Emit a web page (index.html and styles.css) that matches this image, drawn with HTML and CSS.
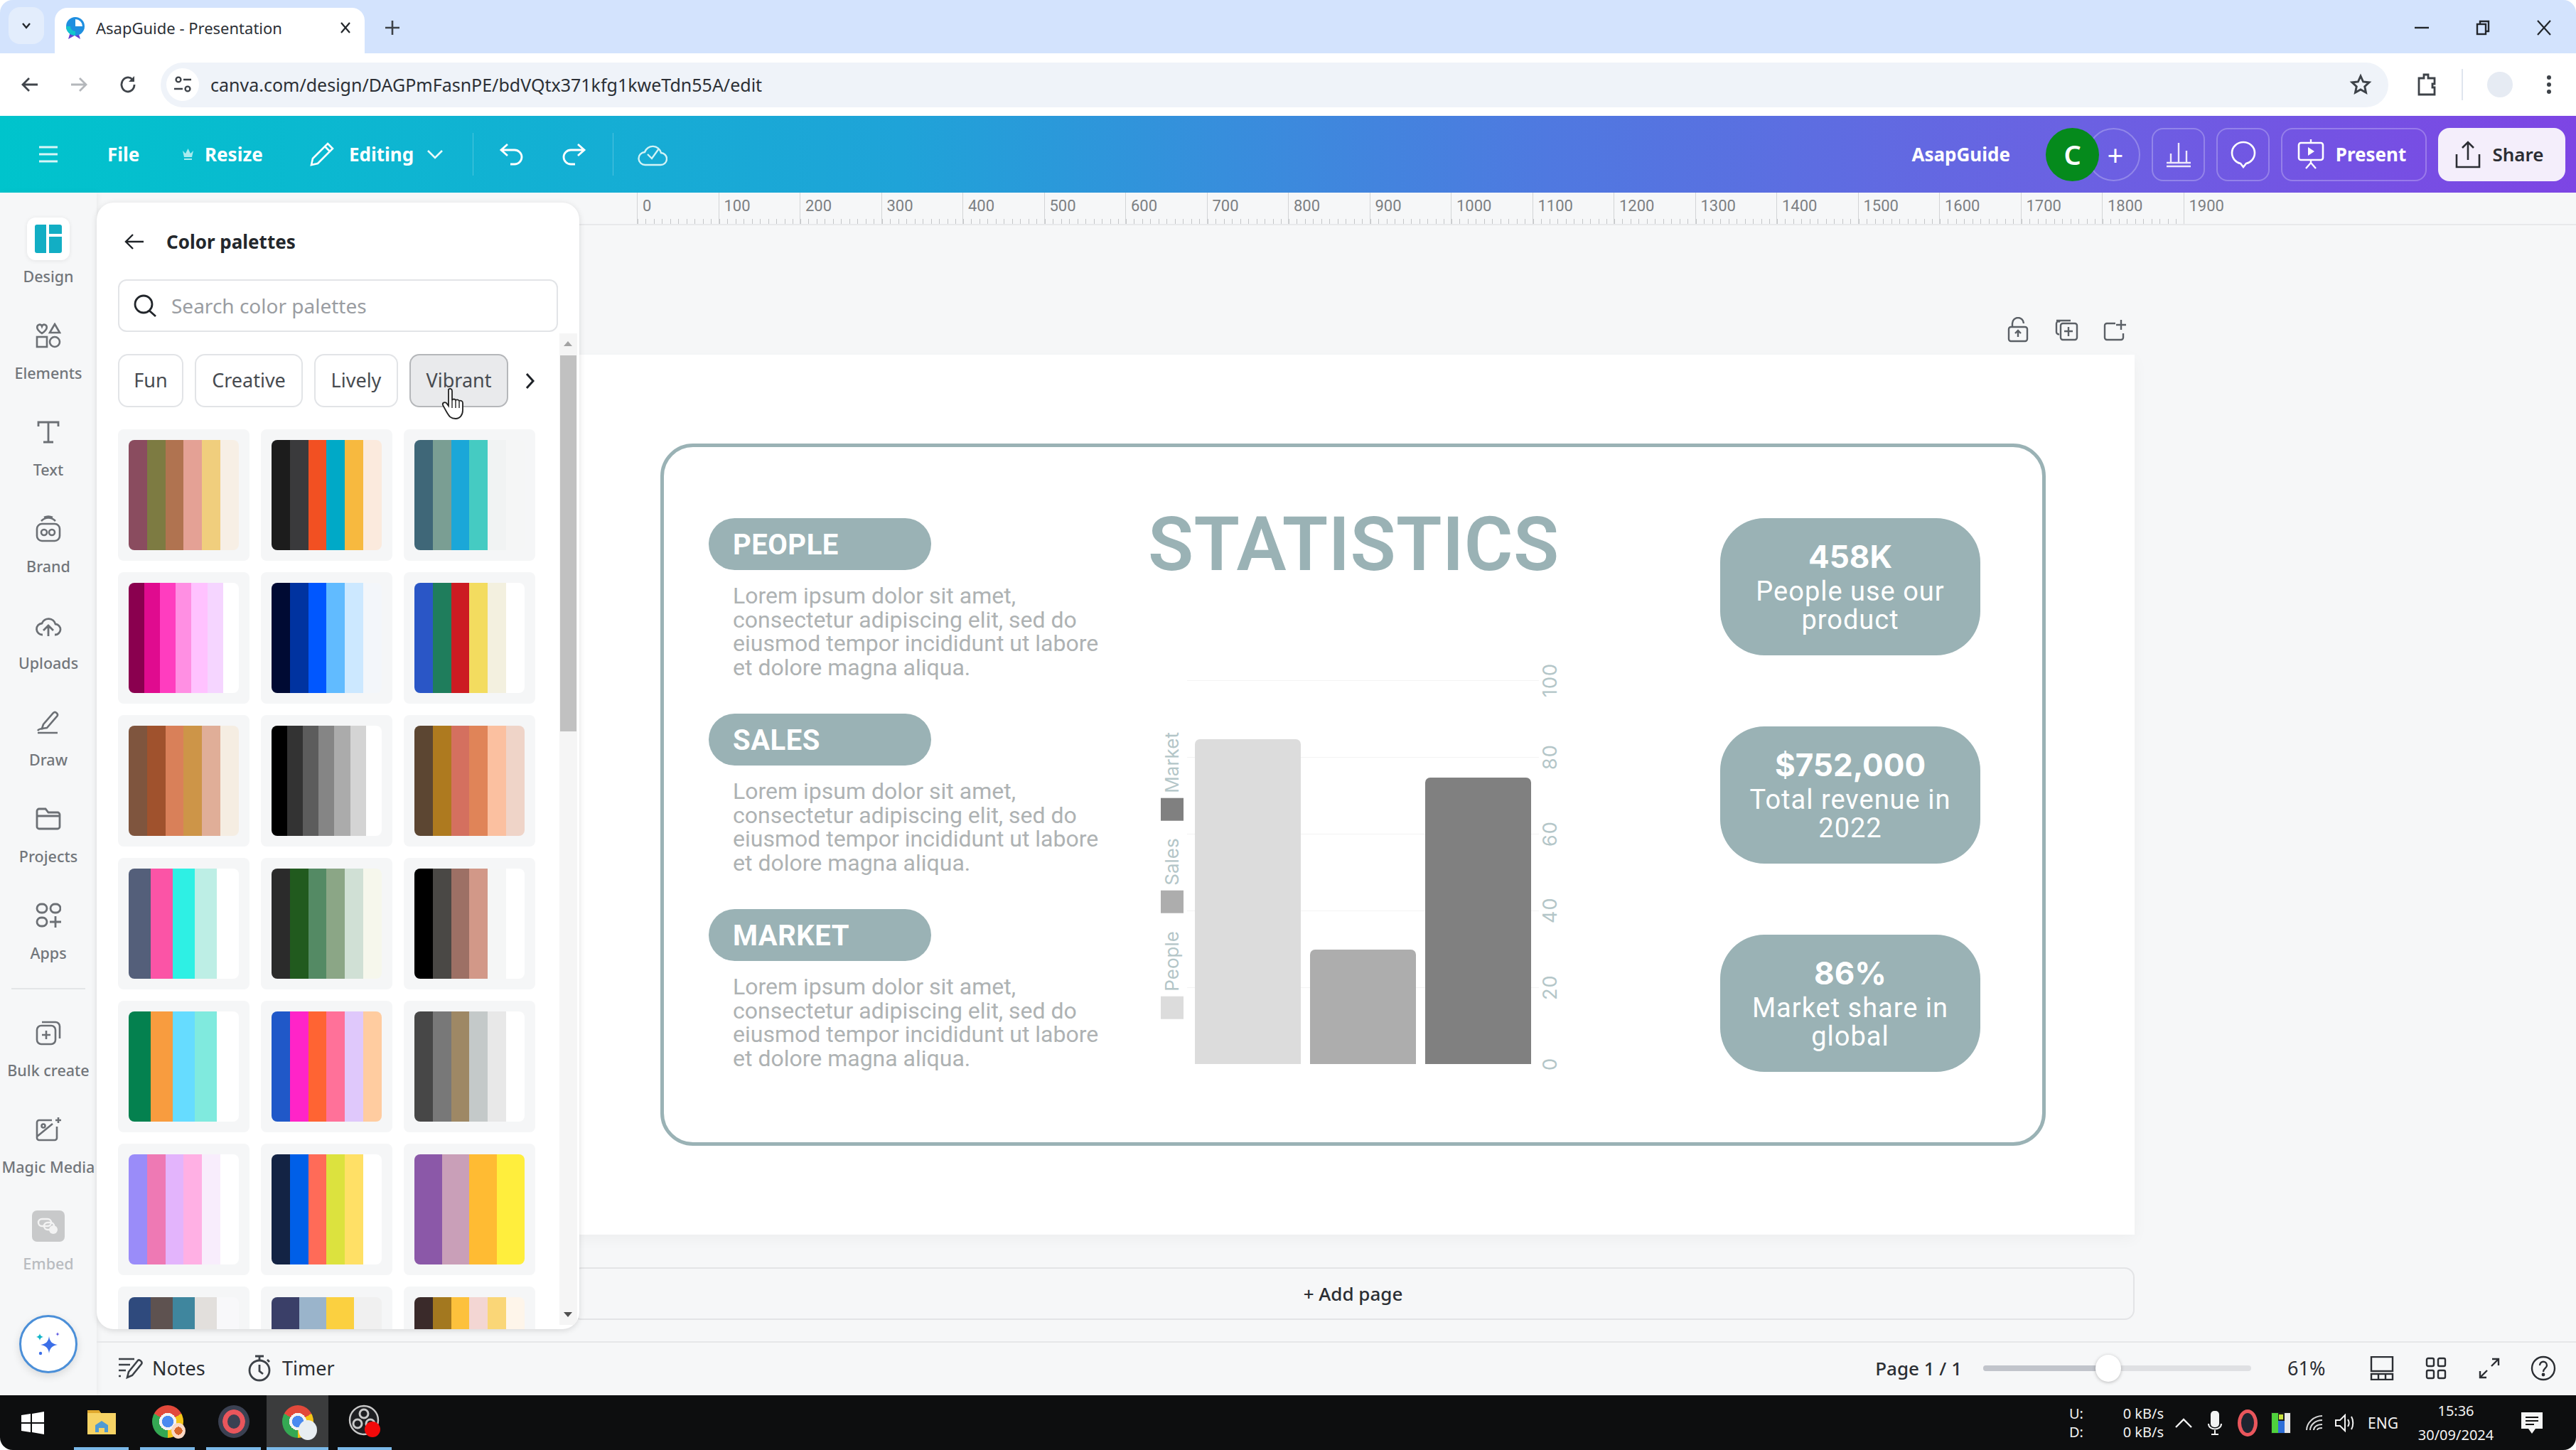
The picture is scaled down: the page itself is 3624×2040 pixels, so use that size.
FILE: index.html
```html
<!DOCTYPE html>
<html lang="en">
<head>
<meta charset="UTF-8">
<title>AsapGuide - Presentation</title>
<link rel="stylesheet" href="styles.css">
</head>
<body>
<div id="screen">

	<!-- browser tabs -->
	<div class="tabstrip">
		<div class="tab-list-btn">
			<svg width="18" height="18" viewBox="0 0 18 18"><path d="M4 6l5 6 5-6" fill="none" stroke="#22262b" stroke-width="2.4"/></svg>
		</div>
		<div class="tab">
			<svg class="favicon" width="30" height="31" viewBox="0 0 30 31"><path d="M8 21l-3 10 9-5 8 5-3-10z" fill="#6a3fd0"/><circle cx="15" cy="13" r="13" fill="#1f8fe0"/><path d="M15 3a10 10 0 0 1 10 10H15z" fill="#fff"/><path d="M2 13a13 13 0 0 0 13 13v-6a7 7 0 0 1-7-7z" fill="#14c4cc"/></svg>
			<span class="tab-title">AsapGuide - Presentation</span>
			<svg class="tab-close" width="20" height="20" viewBox="0 0 20 20"><path d="M4 3l12 14M16 3L4 17" stroke="#22262b" stroke-width="2.2"/></svg>
		</div>
		<svg class="new-tab" width="24" height="24" viewBox="0 0 24 24"><path d="M12 2v20M2 12h20" stroke="#3d4248" stroke-width="2.6"/></svg>
		<div class="win-btns">
			<svg width="24" height="24" viewBox="0 0 24 24"><path d="M2 12h20" stroke="#22262b" stroke-width="2.4"/></svg>
			<svg width="24" height="24" viewBox="0 0 24 24"><rect x="4" y="7" width="12" height="14" fill="none" stroke="#22262b" stroke-width="2.4"/><path d="M8 7V3h12v14h-4" fill="none" stroke="#22262b" stroke-width="2.4"/></svg>
			<svg width="24" height="24" viewBox="0 0 24 24"><path d="M3 2l18 20M21 2L3 22" stroke="#22262b" stroke-width="2.2"/></svg>
		</div>
	</div>

	<!-- address bar -->
	<div class="toolbar">
		<svg width="26" height="26" viewBox="0 0 26 26"><path d="M24 13H4M12 4l-9 9 9 9" fill="none" stroke="#40454b" stroke-width="2.8"/></svg>
		<svg class="nav-off" width="26" height="26" viewBox="0 0 26 26"><path d="M2 13h20M14 4l9 9-9 9" fill="none" stroke="#b4b7bb" stroke-width="2.8"/></svg>
		<svg class="nav-reload" width="26" height="28" viewBox="0 0 26 28"><path d="M22 14a9 10 0 1 1-3-7.5" fill="none" stroke="#40454b" stroke-width="2.8"/><path d="M22 2v8h-8z" fill="#40454b"/></svg>
		<div class="omnibox">
			<span class="site-info">
				<svg width="26" height="26" viewBox="0 0 26 26" fill="none" stroke="#3d4248" stroke-width="2.4"><circle cx="7" cy="6" r="3.4"/><path d="M14 6h11M1 19h12"/><circle cx="20" cy="19" r="3.4"/></svg>
			</span>
			<span class="url">canva.com/design/DAGPmFasnPE/bdVQtx371kfg1kweTdn55A/edit</span>
			<svg class="star" width="32" height="32" viewBox="0 0 24 24"><path d="M12 3l2.7 6 6.3.7-4.7 4.3 1.3 6.4L12 17.2l-5.6 3.2 1.3-6.4L3 9.7 9.3 9z" fill="none" stroke="#3d4248" stroke-width="2.2"/></svg>
		</div>
		<svg class="ext" width="30" height="34" viewBox="0 0 30 34"><path d="M4 8h7V3h6v5h9v8h-3v5h3v10H4z" fill="none" stroke="#3d4248" stroke-width="2.8"/></svg>
		<span class="tb-sep"></span>
		<span class="avatar-blank"></span>
		<svg class="kebab" width="8" height="28" viewBox="0 0 8 28"><circle cx="4" cy="4" r="3" fill="#3d4248"/><circle cx="4" cy="14" r="3" fill="#3d4248"/><circle cx="4" cy="24" r="3" fill="#3d4248"/></svg>
	</div>

	<!-- canva header -->
	<div class="appbar">
		<svg class="menu-icon" width="28" height="28" viewBox="0 0 28 28"><path d="M1 4h26M1 14h26M1 24h26" stroke="#d8f6f7" stroke-width="3"/></svg>
		<span class="ab-text ab-file">File</span>
		<svg class="crown" width="17" height="20" viewBox="0 0 17 20"><path d="M1 5l4 4 3.5-7 3.5 7 4-4-2 9H3zM3 16h11v2H3z" fill="#a8ebee"/></svg>
		<span class="ab-text ab-resize">Resize</span>
		<svg class="pencil" width="36" height="36" viewBox="0 0 36 36"><path d="M26 3l7 7L12 31l-9 2 2-9zM22 7l7 7" fill="none" stroke="#fff" stroke-width="2.6"/></svg>
		<span class="ab-text ab-editing">Editing</span>
		<svg class="ab-chev" width="24" height="16" viewBox="0 0 24 16"><path d="M2 3l10 10L22 3" fill="none" stroke="#e8fbfb" stroke-width="2.6"/></svg>
		<span class="ab-sep"></span>
		<svg class="undo" width="36" height="32" viewBox="0 0 36 32"><path d="M12 2L3 10l9 8M4 10h18a10 10 0 0 1 0 20h-6" fill="none" stroke="#fff" stroke-width="2.8"/></svg>
		<svg class="redo" width="36" height="32" viewBox="0 0 36 32"><path d="M24 2l9 8-9 8M32 10H14a10 10 0 0 0 0 20h6" fill="none" stroke="#fff" stroke-width="2.8"/></svg>
		<span class="ab-sep ab-sep2"></span>
		<svg class="cloud" width="42" height="36" viewBox="0 0 42 36"><path d="M11 33a9 9 0 0 1-1-18 12 12 0 0 1 23 1 8.500 8.500 0 0 1-1 17z" fill="none" stroke="#d2f3f6" stroke-width="2.4"/><path d="M14 18l6 6 10-14" fill="none" stroke="#d2f3f6" stroke-width="2.4"/></svg>

		<span class="ab-spacer"></span>
		<span class="ab-text ab-brand">AsapGuide</span>
		<div class="collab">
			<span class="collab-c">C</span>
			<span class="collab-plus">+</span>
		</div>
		<div class="ab-btn ab-btn-sq">
			<svg width="36" height="38" viewBox="0 0 36 38"><path d="M1 36h34M7 30V18M18 30V3M29 30V14M1 31h34" stroke="#eee8fb" stroke-width="2.4" fill="none"/></svg>
		</div>
		<div class="ab-btn ab-btn-sq">
			<svg width="38" height="40" viewBox="0 0 38 40"><path d="M19 3c9 0 16 7 16 15s-6 14-12 15l-4 5-4-5C9 32 3 26 3 18S10 3 19 3z" fill="none" stroke="#fff" stroke-width="2.6"/></svg>
		</div>
		<div class="ab-btn ab-present">
			<svg width="38" height="42" viewBox="0 0 38 42"><path d="M19 0v5" stroke="#fff" stroke-width="2.4"/><rect x="2" y="5" width="34" height="24" rx="3" fill="none" stroke="#fff" stroke-width="2.6"/><path d="M15 11l9 6-9 6z" fill="#fff"/><path d="M19 29v4M19 33l-7 8M19 33l7 8" stroke="#fff" stroke-width="2.4"/></svg>
			<span class="ab-text">Present</span>
		</div>
		<div class="ab-btn ab-share">
			<svg width="36" height="40" viewBox="0 0 36 40"><path d="M18 28V3M10 11l8-8 8 8M2 20v18h32V20" fill="none" stroke="#2b2d33" stroke-width="2.6"/></svg>
			<span>Share</span>
		</div>
	</div>

	<div class="workspace">

		<!-- left rail -->
		<div class="rail">
			<div class="rail-item">
				<span class="rail-icon rail-tile">
					<svg width="38" height="40" viewBox="0 0 38 40"><path d="M3 0h13v40H3a3 3 0 0 1-3-3V3a3 3 0 0 1 3-3z" fill="#12aec4"/><path d="M20 0h15a3 3 0 0 1 3 3v10H20z" fill="#12aec4"/><path d="M20 17h18v20a3 3 0 0 1-3 3H20z" fill="#12aec4"/></svg>
				</span>
				<span class="rail-label">Design</span>
			</div>
			<div class="rail-item">
				<span class="rail-icon">
					<svg width="36" height="36" viewBox="0 0 36 36" fill="none" stroke="#6c7075" stroke-width="2.6"><path d="M9 15C2 10 1 7 3 4c2-2 5-2 6 1 1-3 4-3 6-1 2 3 1 6-6 11z"/><path d="M27 2l7 12H20z"/><rect x="2" y="20" width="14" height="14"/><circle cx="27" cy="27" r="7"/></svg>
				</span>
				<span class="rail-label">Elements</span>
			</div>
			<div class="rail-item">
				<span class="rail-icon">
					<svg width="34" height="34" viewBox="0 0 34 34" fill="none" stroke="#6c7075" stroke-width="2.8"><path d="M3 9V3h28v6M17 3v28M10 31h14"/></svg>
				</span>
				<span class="rail-label">Text</span>
			</div>
			<div class="rail-item">
				<span class="rail-icon">
					<svg width="36" height="38" viewBox="0 0 36 38" fill="none" stroke="#6c7075" stroke-width="2.6"><path d="M8 8c6-6 14-6 20 0M12 3c4-2 8-2 12 0"/><rect x="2" y="12" width="32" height="24" rx="7"/><circle cx="12" cy="24" r="4"/><circle cx="23" cy="24" r="4"/></svg>
				</span>
				<span class="rail-label">Brand</span>
			</div>
			<div class="rail-item">
				<span class="rail-icon">
					<svg width="38" height="34" viewBox="0 0 38 34" fill="none" stroke="#6c7075" stroke-width="2.8"><path d="M11 30a8 8 0 0 1-1-16 10 10 0 0 1 19 1 7.500 7.500 0 0 1-1 15M19 32V18M12 24l7-7 7 7"/></svg>
				</span>
				<span class="rail-label">Uploads</span>
			</div>
			<div class="rail-item">
				<span class="rail-icon">
					<svg width="36" height="36" viewBox="0 0 36 36" fill="none" stroke="#6c7075" stroke-width="2.6"><path d="M11 21L25 5c3-3 8 2 5 5L16 26l-7 1z"/><path d="M3 33h28M3 30c2-3 5-3 8-3"/></svg>
				</span>
				<span class="rail-label">Draw</span>
			</div>
			<div class="rail-item">
				<span class="rail-icon">
					<svg width="36" height="34" viewBox="0 0 36 34" fill="none" stroke="#6c7075" stroke-width="2.8"><path d="M2 6a3 3 0 0 1 3-3h9l4 5h13a3 3 0 0 1 3 3v17a3 3 0 0 1-3 3H5a3 3 0 0 1-3-3zM2 13h32"/></svg>
				</span>
				<span class="rail-label">Projects</span>
			</div>
			<div class="rail-item">
				<span class="rail-icon">
					<svg width="36" height="36" viewBox="0 0 36 36" fill="none" stroke="#6c7075" stroke-width="2.8"><rect x="2" y="2" width="14" height="12" rx="6"/><rect x="21" y="2" width="14" height="12" rx="6"/><rect x="2" y="21" width="14" height="12" rx="6"/><path d="M28 19v16M20 27h16"/></svg>
				</span>
				<span class="rail-label">Apps</span>
			</div>
			<div class="rail-sep"></div>
			<div class="rail-item">
				<span class="rail-icon">
					<svg width="36" height="36" viewBox="0 0 36 36" fill="none" stroke="#6c7075" stroke-width="2.6"><rect x="2" y="8" width="26" height="26" rx="6"/><path d="M9 3h19a6 6 0 0 1 6 6v17M15 15v12M9 21h12"/></svg>
				</span>
				<span class="rail-label">Bulk create</span>
			</div>
			<div class="rail-item">
				<span class="rail-icon">
					<svg width="38" height="36" viewBox="0 0 38 36" fill="none" stroke="#6c7075" stroke-width="2.6"><path d="M24 5H6a3 3 0 0 0-3 3v22a3 3 0 0 0 3 3h22a3 3 0 0 0 3-3V14M3 28l22-18"/><circle cx="12" cy="13" r="2.500"/><path d="M33 1v8M29 5h8"/></svg>
				</span>
				<span class="rail-label">Magic Media</span>
			</div>
			<div class="rail-item rail-muted">
				<span class="rail-icon">
					<span class="embed-tile">
						<svg width="32" height="26" viewBox="0 0 32 26" fill="none" stroke="#f3f3f3" stroke-width="2.400"><rect x="2" y="3" width="18" height="10" rx="5"/><rect x="10" y="8" width="14" height="10" rx="5"/><circle cx="23" cy="18" r="6" fill="#f3f3f3" stroke="none"/></svg>
					</span>
				</span>
				<span class="rail-label">Embed</span>
			</div>
			<div class="ai-btn">
				<svg width="40" height="40" viewBox="0 0 40 40"><path d="M21 9c1 8 5 11 12 12-7 1-11 4-12 12-1-8-5-11-12-12 7-1 11-4 12-12z" fill="#3c6fe8"/><path d="M8 5c.5 3 2 4 5 5-3 .5-4.500 2-5 5-.5-3-2-4.500-5-5 3-1 4.500-2 5-5z" fill="#12b5c8"/><path d="M33 3c.3 2 1 3 3 3-2 .3-2.700 1-3 3-.3-2-1-2.700-3-3 2 0 2.700-1 3-3z" fill="#5a55e0"/><circle cx="9" cy="33" r="2.200" fill="#3c6fe8"/></svg>
			</div>
		</div>

		<!-- palette panel, lies over the canvas -->
		<div class="panel">
			<div class="panel-head">
				<svg width="28" height="24" viewBox="0 0 28 24"><path d="M27 12H3M12 2L2 12l10 10" fill="none" stroke="#1f2328" stroke-width="2.400"/></svg>
				<span class="panel-title">Color palettes</span>
			</div>
			<div class="search">
				<svg width="34" height="34" viewBox="0 0 34 34"><circle cx="15" cy="15" r="12" fill="none" stroke="#22262b" stroke-width="2.800"/><path d="M23 24l9 8" stroke="#22262b" stroke-width="2.800"/></svg>
				<span>Search color palettes</span>
			</div>
			<div class="chips">
				<span class="chip chip-fun">Fun</span>
				<span class="chip chip-creative">Creative</span>
				<span class="chip chip-lively">Lively</span>
				<span class="chip chip-vibrant">Vibrant</span>
				<svg class="chip-next" width="14" height="24" viewBox="0 0 14 24"><path d="M2 2l9 10-9 10" fill="none" stroke="#1f2328" stroke-width="3"/></svg>
			</div>
			<div class="pal-grid">
				<div class="pal-card"><div class="swatch p11"></div></div>
				<div class="pal-card"><div class="swatch p12"></div></div>
				<div class="pal-card"><div class="swatch p13"></div></div>
				<div class="pal-card"><div class="swatch p21"></div></div>
				<div class="pal-card"><div class="swatch p22"></div></div>
				<div class="pal-card"><div class="swatch p23"></div></div>
				<div class="pal-card"><div class="swatch p31"></div></div>
				<div class="pal-card"><div class="swatch p32"></div></div>
				<div class="pal-card"><div class="swatch p33"></div></div>
				<div class="pal-card"><div class="swatch p41"></div></div>
				<div class="pal-card"><div class="swatch p42"></div></div>
				<div class="pal-card"><div class="swatch p43"></div></div>
				<div class="pal-card"><div class="swatch p51"></div></div>
				<div class="pal-card"><div class="swatch p52"></div></div>
				<div class="pal-card"><div class="swatch p53"></div></div>
				<div class="pal-card"><div class="swatch p61"></div></div>
				<div class="pal-card"><div class="swatch p62"></div></div>
				<div class="pal-card"><div class="swatch p63"></div></div>
				<div class="pal-card"><div class="swatch p71"></div></div>
				<div class="pal-card"><div class="swatch p72"></div></div>
				<div class="pal-card"><div class="swatch p73"></div></div>
			</div>
			<div class="scrollbar">
				<span class="sb-up"></span>
				<span class="sb-thumb"></span>
				<span class="sb-down"></span>
			</div>
			<svg class="cursor" width="36" height="46" viewBox="0 0 36 46"><path d="M11 3c2-2 5-1 5 2v13c1-2 4-2 5 0 1-1 4-1 5 1 2-1 5 0 5 3v10c0 7-4 12-10 12-7 0-9-3-13-10l-5-9c-1-3 2-5 5-3l3 4V5z" fill="#fff" stroke="#222" stroke-width="1.800"/><path d="M16 18v11M21 19v10M26 20v9" stroke="#222" stroke-width="1.400"/></svg>
		</div>

		<div class="main">
			<div class="ruler">
				<div class="r-cell"><span>0</span></div>
				<div class="r-cell"><span>100</span></div>
				<div class="r-cell"><span>200</span></div>
				<div class="r-cell"><span>300</span></div>
				<div class="r-cell"><span>400</span></div>
				<div class="r-cell"><span>500</span></div>
				<div class="r-cell"><span>600</span></div>
				<div class="r-cell"><span>700</span></div>
				<div class="r-cell"><span>800</span></div>
				<div class="r-cell"><span>900</span></div>
				<div class="r-cell"><span>1000</span></div>
				<div class="r-cell"><span>1100</span></div>
				<div class="r-cell"><span>1200</span></div>
				<div class="r-cell"><span>1300</span></div>
				<div class="r-cell"><span>1400</span></div>
				<div class="r-cell"><span>1500</span></div>
				<div class="r-cell"><span>1600</span></div>
				<div class="r-cell"><span>1700</span></div>
				<div class="r-cell"><span>1800</span></div>
				<div class="r-cell r-last"><span>1900</span></div>
			</div>

			<div class="stage">
				<div class="page-tools">
					<svg width="32" height="36" viewBox="0 0 32 36" fill="none" stroke="#5b6066" stroke-width="2.400"><rect x="3" y="14" width="26" height="20" rx="3"/><path d="M8 14V9a8 8 0 0 1 16 0M16 28v-8M12 23l4-4 4 4"/></svg>
					<svg width="34" height="32" viewBox="0 0 34 32" fill="none" stroke="#5b6066" stroke-width="2.400"><path d="M8 5a3 3 0 0 0-5 2v12a3 3 0 0 0 4 3"/><rect x="9" y="7" width="23" height="23" rx="3"/><path d="M3 3h20M20 12v13M14 18h12"/></svg>
					<svg width="34" height="32" viewBox="0 0 34 32" fill="none" stroke="#5b6066" stroke-width="2.400"><path d="M17 7H5a3 3 0 0 0-3 3v17a3 3 0 0 0 3 3h20a3 3 0 0 0 3-3v-6M25 2v14M18 9h14"/></svg>
				</div>

				<div class="slide">
					<div class="frame">
						<div class="col-topics">
							<div class="topic">
								<div class="pill">PEOPLE</div>
								<p>Lorem ipsum dolor sit amet, consectetur adipiscing elit, sed do eiusmod tempor incididunt ut labore et dolore magna aliqua.</p>
							</div>
							<div class="topic">
								<div class="pill">SALES</div>
								<p>Lorem ipsum dolor sit amet, consectetur adipiscing elit, sed do eiusmod tempor incididunt ut labore et dolore magna aliqua.</p>
							</div>
							<div class="topic">
								<div class="pill">MARKET</div>
								<p>Lorem ipsum dolor sit amet, consectetur adipiscing elit, sed do eiusmod tempor incididunt ut labore et dolore magna aliqua.</p>
							</div>
						</div>

						<div class="col-chart">
							<h1>STATISTICS</h1>
							<div class="chart">
								<div class="legend">
									<div class="leg-item"><span class="leg-sw leg-people"></span>People</div>
									<div class="leg-item"><span class="leg-sw leg-sales"></span>Sales</div>
									<div class="leg-item"><span class="leg-sw leg-market"></span>Market</div>
								</div>
								<div class="plot">
									<div class="bar bar-people"></div>
									<div class="bar bar-sales"></div>
									<div class="bar bar-market"></div>
								</div>
								<div class="axis">
									<span>100</span>
									<span>80</span>
									<span>60</span>
									<span>40</span>
									<span>20</span>
									<span>0</span>
								</div>
							</div>
						</div>

						<div class="col-stats">
							<div class="stat">
								<strong>458K</strong>
								<span>People use our<br>product</span>
							</div>
							<div class="stat">
								<strong>$752,000</strong>
								<span>Total revenue in<br>2022</span>
							</div>
							<div class="stat">
								<strong>86%</strong>
								<span>Market share in<br>global</span>
							</div>
						</div>
					</div>
				</div>

				<div class="add-page">+ Add page</div>
			</div>

			<div class="bottombar">
				<svg width="36" height="34" viewBox="0 0 36 34" fill="none" stroke="#3d4248" stroke-width="2.600"><path d="M1 4h22M1 12h16M1 20h10M1 28h3"/><path d="M13 30l2-8L28 6c2-2 7 2 5 5L20 27z"/></svg>
				<span class="bb-notes">Notes</span>
				<svg class="bb-timer-ic" width="32" height="38" viewBox="0 0 32 38" fill="none" stroke="#3d4248" stroke-width="2.800"><circle cx="16" cy="22" r="14"/><path d="M10 2h12M16 2v6M16 14v9l5 4M27 7l3 3"/></svg>
				<span class="bb-timer">Timer</span>
				<span class="ab-spacer"></span>
				<span class="bb-page">Page 1 / 1</span>
				<div class="zoom-slider"><span class="zs-fill"></span><span class="zs-thumb"></span></div>
				<span class="bb-zoom">61%</span>
				<svg class="bb-ic1" width="34" height="34" viewBox="0 0 34 34" fill="none" stroke="#2b2e33" stroke-width="2.400"><rect x="2" y="1" width="30" height="20"/><rect x="2" y="25" width="30" height="8"/><path d="M12 25v8M22 25v8"/></svg>
				<svg class="bb-ic2" width="30" height="32" viewBox="0 0 30 32" fill="none" stroke="#2b2e33" stroke-width="2.400"><rect x="2" y="2" width="10" height="11" rx="2"/><rect x="18" y="2" width="10" height="11" rx="2"/><rect x="2" y="19" width="10" height="11" rx="2"/><rect x="18" y="19" width="10" height="11" rx="2"/></svg>
				<svg class="bb-ic3" width="32" height="32" viewBox="0 0 32 32" fill="none" stroke="#2b2e33" stroke-width="2.400"><path d="M20 3h9v9M29 3L19 13M12 29H3v-9M3 29l10-10"/></svg>
				<svg class="bb-ic4" width="36" height="36" viewBox="0 0 36 36" fill="none" stroke="#2b2e33" stroke-width="2.400"><circle cx="18" cy="18" r="16"/><path d="M13 14c0-7 10-7 10 0 0 4-5 4-5 9"/><circle cx="18" cy="27" r="1.200" fill="#2b2e33"/></svg>
			</div>
		</div>
	</div>

	<!-- windows taskbar -->
	<div class="taskbar">
		<svg class="tk-win" width="32" height="32" viewBox="0 0 32 32"><path d="M0 5l13-2v12H0zM15 3l17-3v15H15zM0 17h13v12L0 27zM15 17h17v15l-17-3z" fill="#fff"/></svg>
		<div class="tk-app tk-a1">
			<svg width="42" height="42" viewBox="0 0 42 42"><path d="M1 5h16l3 4h21v30H1z" fill="#f6d365"/><path d="M1 5h16l3 4H1z" fill="#e0a92e"/><path d="M12 36V26l9-6 9 6v10h-5v-6h-8v6z" fill="#4f9bd4"/></svg>
		</div>
		<div class="tk-app tk-a2"><span class="chrome"><span class="chrome-badge chrome-badge-or"></span></span></div>
		<div class="tk-app tk-a3"><span class="ring-app"></span></div>
		<div class="tk-app tk-a4 tk-active"><span class="chrome"><span class="chrome-badge"></span></span></div>
		<div class="tk-app tk-a5">
			<svg width="46" height="48" viewBox="0 0 46 48"><circle cx="22" cy="22" r="20" fill="#1e1f22" stroke="#c9c9c9" stroke-width="2.400"/><circle cx="22" cy="13" r="6" fill="none" stroke="#c9c9c9" stroke-width="3"/><circle cx="13" cy="27" r="6" fill="none" stroke="#c9c9c9" stroke-width="3"/><circle cx="31" cy="27" r="6" fill="none" stroke="#c9c9c9" stroke-width="3"/><circle cx="34" cy="35" r="11" fill="#f30a0a"/></svg>
		</div>

		<span class="ab-spacer"></span>

		<div class="tray-net">
			<span class="net-row"><span>U:</span><span>0 kB/s</span></span>
			<span class="net-row"><span>D:</span><span>0 kB/s</span></span>
		</div>
		<svg class="tr-up" width="26" height="16" viewBox="0 0 26 16"><path d="M2 14L13 3l11 11" fill="none" stroke="#f2f2f2" stroke-width="2.400"/></svg>
		<svg class="tr-mic" width="22" height="34" viewBox="0 0 22 34"><rect x="5" y="0" width="12" height="23" rx="5" fill="#f2f2f2"/><path d="M2 18c0 10 18 10 18 0M11 27v5M6 33h10" fill="none" stroke="#f2f2f2" stroke-width="2"/></svg>
		<span class="tr-rec"></span>
		<svg class="tr-app" width="28" height="30" viewBox="0 0 28 30"><rect width="28" height="30" fill="#1b1b1b"/><rect x="1" y="1" width="9" height="28" fill="#4fd13d"/><rect x="10" y="12" width="9" height="17" fill="#2f6fd8"/><rect x="19" y="1" width="8" height="28" fill="#e8e8e8"/><path d="M11 3h6v7h-6z" fill="#c8e23d"/></svg>
		<svg class="tr-wifi" width="26" height="24" viewBox="0 0 26 24" fill="none" stroke="#d8d8d8" stroke-width="2"><path d="M2 22C2 12 12 2 24 2M7 22c0-7 7-14 17-14M12 22c0-4 4-8 12-8M17 22c0-2 2-3 7-3"/></svg>
		<svg class="tr-vol" width="32" height="26" viewBox="0 0 32 26" fill="none" stroke="#f2f2f2" stroke-width="2"><path d="M2 9h6l7-7v22l-7-7H2zM19 8c2 3 2 7 0 10M24 4c3 5 3 13 0 18"/></svg>
		<span class="tr-eng">ENG</span>
		<div class="tr-clock">
			<span>15:36</span>
			<span>30/09/2024</span>
		</div>
		<svg class="tr-note" width="32" height="32" viewBox="0 0 32 32"><path d="M1 1h30v23H21l-5 7-5-7H1z" fill="#f4f4f4"/><path d="M7 8h18M7 13h18M7 18h12" stroke="#111" stroke-width="2"/></svg>
	</div>
</div>
</body>
</html>
```
FILE: styles.css
```css
* {
	box-sizing: border-box;
}

body {
	margin: 0;
	padding: 0;
	background: #fff;
	font-family: "Noto Sans", sans-serif;
}

#screen {
	width: 3624px;
	height: 2040px;
	display: flex;
	flex-direction: column;
	overflow: hidden;
	border-radius: 18px;
	background: #f6f7f8;
}

svg {
	flex: none;
	display: block;
}

/* ---------- browser tabs ---------- */
.tabstrip {
	height: 75px;
	flex: none;
	display: flex;
	align-items: flex-end;
	background: #d3e3fd;
}

.tab-list-btn {
	width: 50px;
	height: 52px;
	margin: 0 15px 13px 12px;
	border-radius: 16px;
	background: #e3edfc;
	display: flex;
	align-items: center;
	justify-content: center;
}

.tab {
	width: 436px;
	height: 64px;
	background: #fff;
	border-radius: 18px 18px 0 0;
	display: flex;
	align-items: center;
	padding: 0 0 8px 14px;
}

.tab-title {
	margin-left: 14px;
	font-size: 22px;
	color: #2c3036;
	width: 344px;
}

.tab-close {
	margin-left: -3px;
}

.new-tab {
	margin: 0 0 24px 27px;
}

.win-btns {
	margin-left: auto;
	display: flex;
	gap: 62px;
	padding: 0 33px 24px 0;
}

/* ---------- address bar ---------- */
.toolbar {
	height: 88px;
	flex: none;
	background: #fff;
	display: flex;
	align-items: center;
	padding-left: 29px;
}

.nav-off {
	margin-left: 43px;
}

.nav-reload {
	margin-left: 43px;
}

.omnibox {
	width: 3134px;
	height: 63px;
	margin-left: 33px;
	border-radius: 32px;
	background: #eff3f9;
	display: flex;
	align-items: center;
}

.site-info {
	width: 46px;
	height: 46px;
	margin-left: 8px;
	border-radius: 50%;
	background: #fff;
	display: flex;
	align-items: center;
	justify-content: center;
}

.url {
	margin-left: 16px;
	font-size: 25px;
	color: #2c3036;
}

.star {
	margin-left: auto;
	margin-right: 23px;
}

.ext {
	margin-left: 39px;
}

.tb-sep {
	width: 2px;
	height: 44px;
	margin-left: 34px;
	background: #dfe5ee;
}

.avatar-blank {
	width: 36px;
	height: 36px;
	margin-left: 34px;
	border-radius: 50%;
	background: #e6ebf3;
}

.kebab {
	margin-left: 47px;
}

/* ---------- canva header ---------- */
.appbar {
	height: 108px;
	flex: none;
	display: flex;
	align-items: center;
	background: linear-gradient(90deg, #00c4cc 0%, #1fa3d8 35%, #4f79e0 60%, #6a62e2 80%, #7d45e4 100%);
	padding-right: 15px;
}

.ab-text {
	font-size: 26px;
	font-weight: 700;
	color: #fff;
}

.menu-icon {
	margin-left: 54px;
}

.ab-file {
	margin-left: 69px;
	width: 47px;
}

.crown {
	margin-left: 58px;
}

.ab-resize {
	margin-left: 15px;
	width: 84px;
}

.pencil {
	margin-left: 63px;
}

.ab-editing {
	margin-left: 20px;
	width: 92px;
}

.ab-chev {
	margin-left: 17px;
}

.ab-sep {
	width: 1px;
	height: 60px;
	margin-left: 41px;
	background: rgba(255, 255, 255, .25);
}

.undo {
	margin-left: 36px;
}

.redo {
	margin-left: 51px;
}

.ab-sep2 {
	margin-left: 37px;
}

.cloud {
	margin-left: 34px;
}

.ab-spacer {
	flex: 1;
}

.ab-brand {
	margin-right: 50px;
}

.collab {
	display: flex;
	margin-right: 16px;
}

.collab-c {
	width: 75px;
	height: 75px;
	border-radius: 50%;
	background: #058a1c;
	color: #fff;
	font-size: 38px;
	font-weight: 600;
	display: flex;
	align-items: center;
	justify-content: center;
	position: relative;
}

.collab-plus {
	width: 75px;
	height: 75px;
	margin-left: -17px;
	border-radius: 50%;
	border: 2px solid rgba(255, 255, 255, .25);
	color: #fff;
	font-size: 40px;
	display: flex;
	align-items: center;
	justify-content: center;
	padding-left: 5px;
}

.ab-btn {
	height: 75px;
	margin-right: 16px;
	border-radius: 16px;
	border: 2px solid rgba(255, 255, 255, .25);
	display: flex;
	align-items: center;
	justify-content: center;
}

.ab-btn-sq {
	width: 75px;
}

.ab-present {
	width: 205px;
	gap: 16px;
	padding-right: 6px;
}

.ab-share {
	width: 179px;
	margin-right: 0;
	gap: 16px;
	padding-right: 6px;
	border: none;
	background: #f4eefb;
	color: #2b2d33;
	font-size: 26px;
	font-weight: 600;
}

/* ---------- workspace ---------- */
.workspace {
	flex: 1;
	min-height: 0;
	display: flex;
	position: relative;
}

.rail {
	width: 136px;
	flex: none;
	display: flex;
	flex-direction: column;
	padding-top: 35px;
	background: #f6f7f8;
	box-shadow: 2px 0 8px rgba(0, 0, 0, .05);
}

.rail-item {
	display: flex;
	flex-direction: column;
	align-items: center;
	margin-bottom: 41px;
}

.rail-icon {
	height: 60px;
	margin-bottom: 11px;
	display: flex;
	align-items: center;
	justify-content: center;
}

.rail-tile {
	width: 60px;
	border-radius: 12px;
	background: #fff;
	box-shadow: 0 1px 6px rgba(0, 0, 0, .08);
}

.rail-label {
	height: 24px;
	line-height: 24px;
	font-size: 21.500px;
	font-weight: 500;
	color: #72767b;
	white-space: nowrap;
}

.rail-sep {
	height: 2px;
	margin: -4px 16px 31px;
	flex: none;
	background: #e3e5e7;
}

.rail-muted .rail-label {
	color: #b9bcc0;
}

.embed-tile {
	width: 46px;
	height: 44px;
	border-radius: 7px;
	background: #c8c9ca;
	display: flex;
	align-items: center;
	justify-content: center;
}

.ai-btn {
	width: 82px;
	height: 82px;
	flex: none;
	margin: auto auto 31px;
	border-radius: 50%;
	border: 3px solid #4b8fd8;
	background: #fff;
	box-shadow: 0 4px 12px rgba(0, 0, 0, .12);
	display: flex;
	align-items: center;
	justify-content: center;
}

/* ---------- palette panel ---------- */
.panel {
	position: absolute;
	left: 136px;
	top: 14px;
	width: 679px;
	height: 1585px;
	padding: 40px 0 0 30px;
	overflow: hidden;
	background: #fff;
	border-radius: 24px;
	box-shadow: 0 2px 8px rgba(0, 0, 0, .13);
	z-index: 2;
}

.panel-head {
	height: 30px;
	display: flex;
	align-items: center;
	padding-left: 9px;
	margin-bottom: 38px;
}

.panel-title {
	margin-left: 31px;
	font-size: 26px;
	font-weight: 700;
	color: #23272c;
}

.search {
	width: 619px;
	height: 74px;
	padding-left: 19px;
	border: 2px solid #e2e4e7;
	border-radius: 12px;
	display: flex;
	align-items: center;
	gap: 20px;
	font-size: 28px;
	color: #9a9da2;
	margin-bottom: 31px;
}

.chips {
	height: 75px;
	display: flex;
	align-items: center;
	gap: 16px;
	margin-bottom: 31px;
}

.chip {
	height: 75px;
	padding-bottom: 3px;
	border: 2px solid #e2e4e7;
	border-radius: 14px;
	display: flex;
	align-items: center;
	justify-content: center;
	font-size: 27px;
	color: #474b50;
}

.chip-fun {
	width: 92px;
}

.chip-creative {
	width: 152px;
}

.chip-lively {
	width: 118px;
}

.chip-vibrant {
	width: 139px;
	border-color: #b5b7ba;
	background: #e9eaec;
}

.chip-next {
	margin-left: 8px;
}

.pal-grid {
	display: grid;
	grid-template-columns: repeat(3, 185px);
	grid-auto-rows: 185px;
	gap: 16px;
}

.pal-card {
	padding: 15px;
	border-radius: 8px;
	background: #f5f6f7;
}

.swatch {
	height: 155px;
	border-radius: 8px;
}

/* palette stripes */
.p11 { background: linear-gradient(90deg, #8a4c5f 0 16.67%, #7d7b42 0 33.33%, #b07350 0 50%, #e4a195 0 66.67%, #f0ce7d 0 83.33%, #f7efe5 0); }
.p12 { background: linear-gradient(90deg, #1c1c1c 0 16.67%, #3a3a3c 0 33.33%, #f25022 0 50%, #00a9c7 0 66.67%, #f7b93f 0 83.33%, #fbeadd 0); }
.p13 { background: linear-gradient(90deg, #3f6778 0 16.67%, #7a9e93 0 33.33%, #1ba7d8 0 50%, #45cbc2 0 66.67%, #f1f3f3 0 83.33%, #f5f6f6 0); }
.p21 { background: linear-gradient(90deg, #8a004f 0 14.5%, #e00b8f 0 28.5%, #ff3dbf 0 42.5%, #ff8fe3 0 57%, #ffc2ff 0 71.5%, #f5d5ff 0 85.5%, #fff 0); }
.p22 { background: linear-gradient(90deg, #000a33 0 16.67%, #0033a0 0 33.33%, #0057ff 0 50%, #61bbff 0 66.67%, #cce8ff 0 83.33%, #f3f6fa 0); }
.p23 { background: linear-gradient(90deg, #2a56c6 0 16.67%, #1f7d5c 0 33.33%, #cc1b22 0 50%, #f3dc5f 0 66.67%, #f3f0df 0 83.33%, #fff 0); }
.p31 { background: linear-gradient(90deg, #7f553e 0 16.67%, #a0522d 0 33.33%, #d98059 0 50%, #cd9548 0 66.67%, #e0ae98 0 83.33%, #f5ede2 0); }
.p32 { background: linear-gradient(90deg, #000 0 14.5%, #333 0 28.5%, #5c5c5c 0 42.5%, #858585 0 57%, #ababab 0 71.5%, #d4d4d4 0 85.5%, #fff 0); }
.p33 { background: linear-gradient(90deg, #5c4632 0 16.67%, #ae7a1f 0 33.33%, #d4705f 0 50%, #e08458 0 66.67%, #fbc0a0 0 83.33%, #efd4c8 0); }
.p41 { background: linear-gradient(90deg, #545f7a 0 20%, #fb54a6 0 40%, #2ef0e4 0 60%, #bdeee5 0 80%, #fff 0); }
.p42 { background: linear-gradient(90deg, #2b2b2b 0 16.67%, #215a1e 0 33.33%, #548a64 0 50%, #8ba686 0 66.67%, #d0e0d5 0 83.33%, #f6f7ec 0); }
.p43 { background: linear-gradient(90deg, #000 0 16.67%, #4a4845 0 33.33%, #9d7065 0 50%, #d29888 0 66.67%, #f5f6f6 0 83.33%, #fff 0); }
.p51 { background: linear-gradient(90deg, #04814f 0 20%, #f89c3f 0 40%, #66dcff 0 60%, #80eade 0 80%, #fff 0); }
.p52 { background: linear-gradient(90deg, #2058c8 0 16.67%, #ff24c8 0 33.33%, #ff6433 0 50%, #ff7199 0 66.67%, #dfc8fb 0 83.33%, #ffcca0 0); }
.p53 { background: linear-gradient(90deg, #474747 0 16.67%, #787878 0 33.33%, #9e8865 0 50%, #c4c9c9 0 66.67%, #e8e8e8 0 83.33%, #fff 0); }
.p61 { background: linear-gradient(90deg, #9a8cf9 0 16.67%, #ee79b4 0 33.33%, #e3b4fc 0 50%, #ffb0e4 0 66.67%, #f8edfc 0 83.33%, #fff 0); }
.p62 { background: linear-gradient(90deg, #132344 0 16.67%, #005fe8 0 33.33%, #ff6b58 0 50%, #dce23e 0 66.67%, #ffe066 0 83.33%, #fff 0); }
.p63 { background: linear-gradient(90deg, #8b58a8 0 25%, #c99fb8 0 50%, #ffbb33 0 75%, #ffee3d 0); }
.p71 { background: linear-gradient(90deg, #2f4a7d 0 20%, #5e5250 0 40%, #3f869e 0 60%, #e2dfdc 0 80%, #f8f8fa 0); }
.p72 { background: linear-gradient(90deg, #3a3f68 0 25%, #9ab4cb 0 50%, #fbd040 0 75%, #f0f0f0 0); }
.p73 { background: linear-gradient(90deg, #3a2a2a 0 16.67%, #a3781f 0 33.33%, #fdc13c 0 50%, #f3d6d3 0 66.67%, #fad677 0 83.33%, #fef5ea 0); }

.scrollbar {
	position: absolute;
	left: 651px;
	top: 184px;
	width: 25px;
	bottom: 6px;
	background: #f5f5f5;
}

.sb-thumb {
	position: absolute;
	left: 1px;
	top: 31px;
	width: 23px;
	height: 529px;
	background: #c1c1c1;
}

.sb-up,
.sb-down {
	position: absolute;
	left: 6px;
	border-left: 6px solid transparent;
	border-right: 6px solid transparent;
}

.sb-up {
	top: 11px;
	border-bottom: 7px solid #a3a3a3;
}

.sb-down {
	bottom: 11px;
	border-top: 7px solid #505050;
}

.cursor {
	position: absolute;
	left: 484px;
	top: 260px;
}

/* ---------- canvas ---------- */
.main {
	flex: 1;
	min-width: 0;
	display: flex;
	flex-direction: column;
}

.ruler {
	height: 46px;
	flex: none;
	display: flex;
	padding-left: 760px;
	border-bottom: 2px solid #e8e9eb;
}

.r-cell {
	width: 114.5px;
	flex: none;
	border-left: 1px solid #d2d4d6;
	padding-left: 7px;
	font-family: Roboto, sans-serif;
	font-size: 22px;
	line-height: 38px;
	color: #7c7f83;
	background: repeating-linear-gradient(90deg, #c4c6c8 0 1px, transparent 1px 11.45px) left bottom / 100% 7px no-repeat;
}

.r-last {
	background: none;
}

.stage {
	flex: 1;
	min-height: 0;
	padding: 129px 0 0 668px;
}

.page-tools {
	width: 2199px;
	height: 36px;
	margin-bottom: 17px;
	padding-right: 10px;
	display: flex;
	justify-content: flex-end;
	align-items: center;
	gap: 35px;
}

.slide {
	width: 2199px;
	height: 1238px;
	padding: 125px;
	background: #fff;
	box-shadow: 0 6px 20px rgba(0, 0, 0, .04);
}

.frame {
	height: 988px;
	border: 5px solid #9ab2b5;
	border-radius: 46px;
	display: grid;
	grid-template-columns: 618px 805px 366px;
	padding: 100px 0 0 63px;
}

.topic {
	height: 275px;
}

.pill {
	width: 313px;
	height: 73px;
	padding-left: 34px;
	border-radius: 37px;
	background: #9ab2b5;
	color: #fff;
	font-family: Roboto, sans-serif;
	font-size: 40px;
	font-weight: 700;
	line-height: 75px;
	letter-spacing: .5px;
}

.topic p {
	width: 530px;
	margin: 20px 0 0 34px;
	font-family: Roboto, sans-serif;
	font-size: 32px;
	line-height: 33.7px;
	color: #aeb2b3;
}

.col-chart h1 {
	height: 75px;
	margin: 0 0 153px;
	font-family: Roboto, sans-serif;
	font-size: 105px;
	font-weight: 600;
	line-height: 75px;
	letter-spacing: .5px;
	color: #9ab2b5;
}

.chart {
	height: 540px;
	display: flex;
	padding-left: 18px;
}

.legend {
	align-self: flex-end;
	margin-bottom: 63px;
	width: 32px;
	display: flex;
	gap: 25px;
	writing-mode: vertical-rl;
	transform: rotate(180deg);
	font-family: Inter, sans-serif;
	font-size: 26px;
	line-height: 30px;
	color: #b4c6c8;
}

.leg-item {
	display: flex;
	gap: 7px;
	align-items: center;
}

.leg-sw {
	width: 32px;
	height: 32px;
}

.leg-people {
	background: #dcdcdc;
}

.leg-sales {
	background: #adadad;
}

.leg-market {
	background: #808080;
}

.plot {
	width: 495px;
	margin-left: 5px;
	padding-left: 11px;
	display: flex;
	align-items: flex-end;
	gap: 13px;
	background: repeating-linear-gradient(180deg, #f3f3f3 0 1px, transparent 1px 108px);
}

.bar {
	width: 149px;
	border-radius: 7px 7px 0 0;
}

.bar-people {
	height: 457px;
	background: #dcdcdc;
}

.bar-sales {
	height: 161px;
	background: #adadad;
}

.bar-market {
	height: 403px;
	background: #808080;
}

.axis {
	width: 32px;
	display: flex;
	flex-direction: column;
	justify-content: space-between;
	font-family: Inter, sans-serif;
	font-size: 27px;
	letter-spacing: 1px;
	color: #b4c6c8;
}

.axis span {
	height: 0;
	display: flex;
	align-items: center;
	justify-content: center;
	line-height: 32px;
	writing-mode: vertical-rl;
	transform: rotate(180deg);
}

.stat {
	height: 193px;
	margin-bottom: 100px;
	border-radius: 62px;
	background: #9ab2b5;
	color: #fff;
	text-align: center;
	padding-top: 29px;
}

.stat strong {
	display: block;
	height: 54px;
	font-family: Inter, sans-serif;
	font-size: 44px;
	font-weight: 700;
	line-height: 50px;
}

.stat span {
	display: block;
	font-family: Roboto, sans-serif;
	font-size: 38px;
	line-height: 40px;
	letter-spacing: 1px;
}

.add-page {
	width: 2199px;
	height: 74px;
	margin-top: 46px;
	border: 2px solid #e3e4e6;
	border-radius: 14px;
	display: flex;
	align-items: center;
	justify-content: center;
	font-size: 26px;
	font-weight: 500;
	color: #2b2e33;
}

/* ---------- bottom bar ---------- */
.bottombar {
	height: 76px;
	flex: none;
	display: flex;
	align-items: center;
	border-top: 2px solid #e6e7e9;
	padding: 0 0 3px 30px;
	font-size: 27px;
	color: #2b2e33;
}

.bb-notes {
	margin-left: 12px;
	width: 78px;
}

.bb-timer-ic {
	margin-left: 57px;
}

.bb-timer {
	margin-left: 16px;
}

.bb-page {
	font-size: 26px;
	font-weight: 500;
}

.zoom-slider {
	width: 377px;
	height: 8px;
	margin-left: 30px;
	border-radius: 4px;
	background: #dfe0e3;
	position: relative;
}

.zs-fill {
	position: absolute;
	left: 0;
	top: 0;
	bottom: 0;
	width: 175px;
	border-radius: 4px;
	background: #c1c4cb;
}

.zs-thumb {
	position: absolute;
	left: 158px;
	top: -15px;
	width: 36px;
	height: 38px;
	border-radius: 50%;
	background: #fff;
	box-shadow: 0 1px 5px rgba(0, 0, 0, .25);
}

.bb-zoom {
	margin-left: 51px;
	width: 52px;
}

.bb-ic1 {
	margin-left: 64px;
}

.bb-ic2 {
	margin-left: 44px;
}

.bb-ic3 {
	margin-left: 44px;
}

.bb-ic4 {
	margin: 0 28px 0 42px;
}

/* ---------- taskbar ---------- */
.taskbar {
	height: 77px;
	flex: none;
	display: flex;
	align-items: center;
	background: #0d0e0f;
	color: #f2f2f2;
	padding-left: 30px;
	font-size: 21px;
}

.tk-app {
	height: 77px;
	display: flex;
	align-items: center;
	justify-content: center;
	border-bottom: 4px solid #7ab8e8;
}

.tk-a1 {
	width: 77px;
	margin-left: 42px;
}

.tk-a2 {
	width: 77px;
	margin-left: 16px;
}

.tk-a3 {
	width: 77px;
	margin-left: 16px;
}

.tk-a4 {
	width: 87px;
	margin-left: 8px;
}

.tk-a5 {
	width: 76px;
	margin-left: 13px;
}

.tk-active {
	background: #3b3c3d;
}

.chrome {
	width: 44px;
	height: 46px;
	border-radius: 50%;
	position: relative;
	background:
		radial-gradient(circle, #4a8af0 0 26%, #f2f2f2 26% 38%, transparent 38%),
		conic-gradient(from 60deg, #f5c518 0 120deg, #34a853 120deg 240deg, #e2493b 240deg 360deg);
}

.chrome-badge {
	position: absolute;
	right: -5px;
	bottom: -3px;
	width: 26px;
	height: 28px;
	border-radius: 50%;
	background: #e8eef2;
}

.chrome-badge-or {
	width: 20px;
	height: 22px;
	right: -3px;
	bottom: -1px;
	background: radial-gradient(circle, #d9692c 0 38%, #fbd9c5 38%);
}

.ring-app {
	width: 44px;
	height: 46px;
	border-radius: 50%;
	border: 6px solid #3b4152;
	background: #3b4152;
	box-shadow: inset 0 0 0 7px #e9565c;
}

.tray-net {
	display: flex;
	flex-direction: column;
	gap: 2px;
	line-height: 24px;
	font-size: 20px;
}

.net-row {
	width: 133px;
	display: flex;
	justify-content: space-between;
}

.tr-up {
	margin-left: 15px;
}

.tr-mic {
	margin-left: 20px;
}

.tr-rec {
	width: 28px;
	height: 38px;
	margin-left: 21px;
	border-radius: 50%;
	border: 5px solid #e9565c;
	background: #1e2430;
}

.tr-app {
	margin-left: 19px;
}

.tr-wifi {
	margin-left: 20px;
}

.tr-vol {
	margin-left: 15px;
}

.tr-eng {
	margin-left: 15px;
	width: 44px;
}

.tr-clock {
	width: 116px;
	margin-left: 22px;
	display: flex;
	flex-direction: column;
	align-items: center;
	gap: 10px;
	line-height: 24px;
	font-size: 20px;
}

.tr-note {
	margin: 0 46px 0 33px;
}
```
